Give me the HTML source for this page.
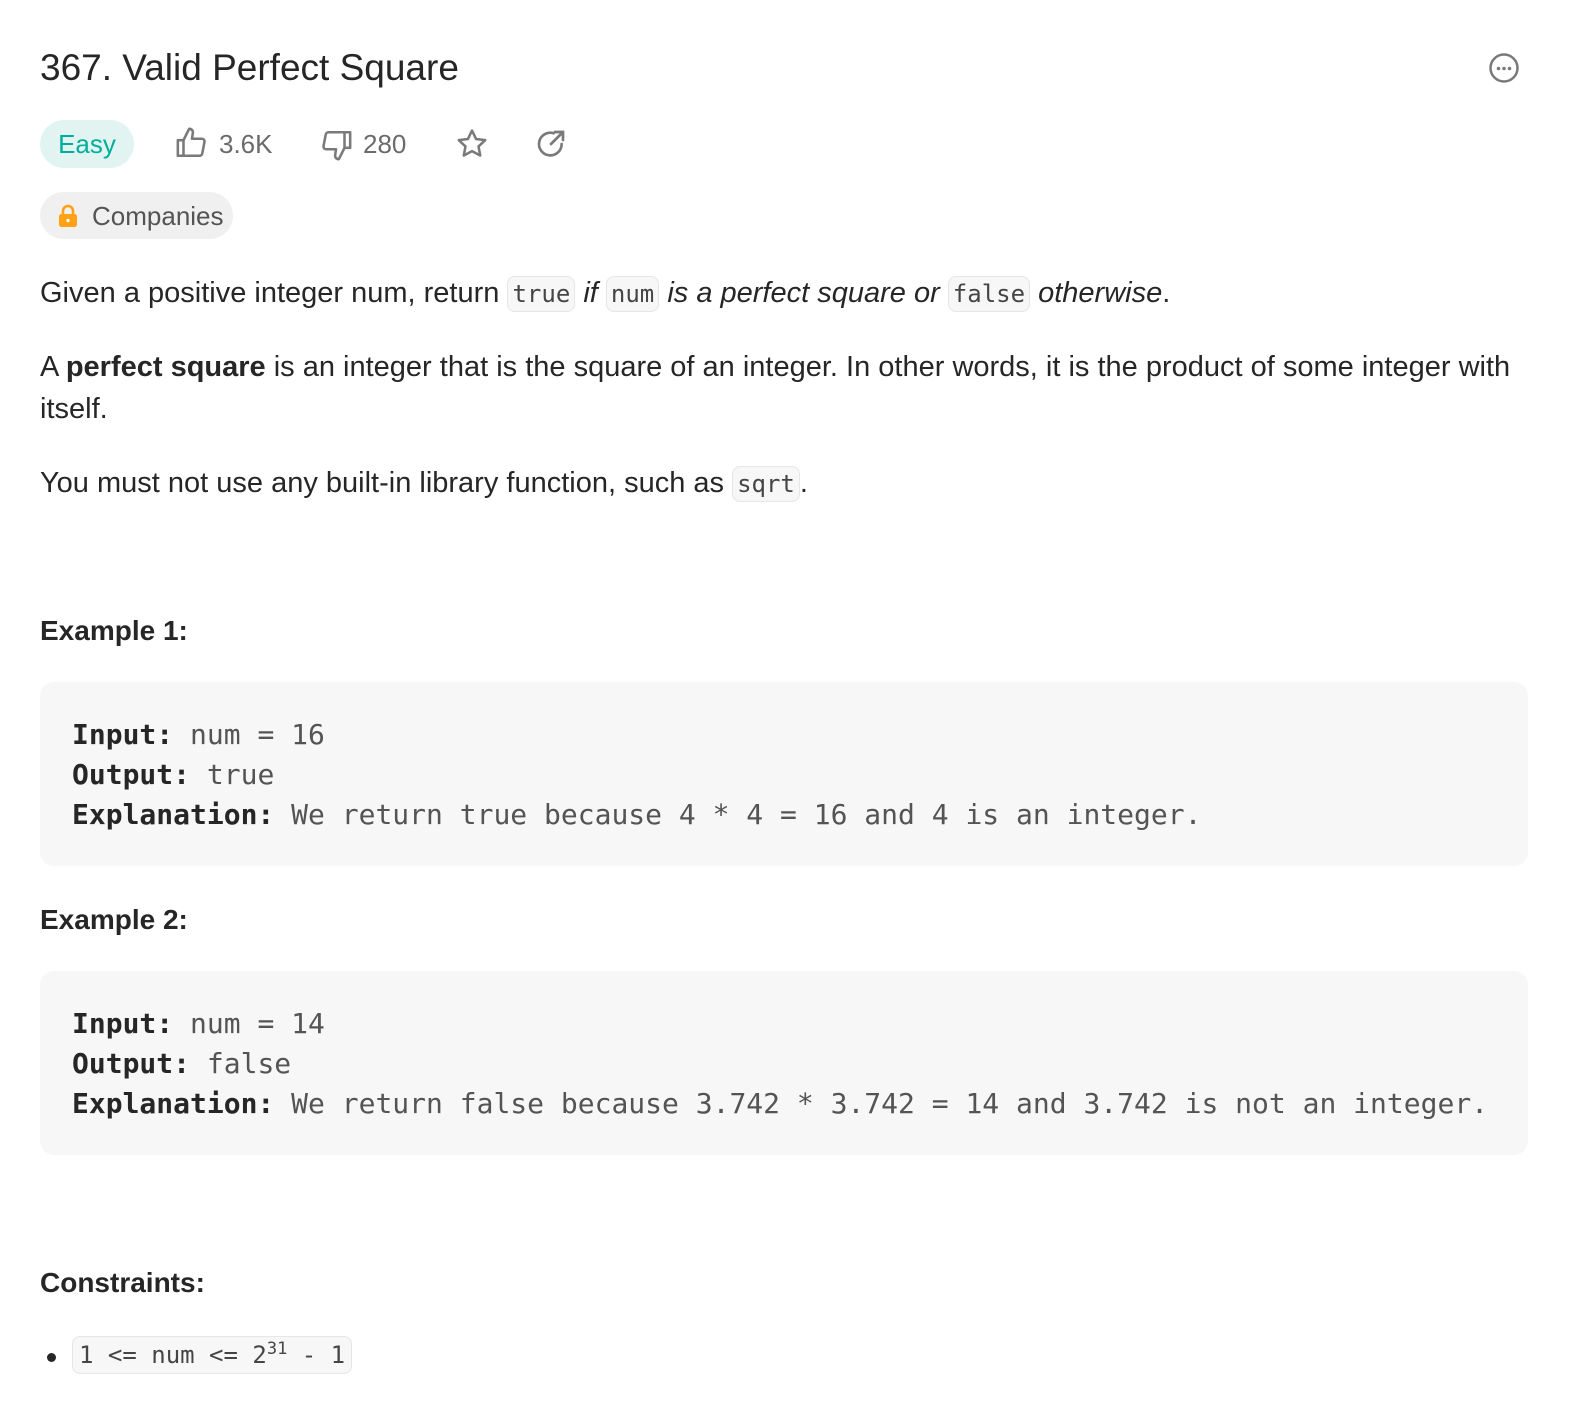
<!DOCTYPE html>
<html><head><meta charset="utf-8"><style>
body{margin:0;background:#fff;width:1572px;height:1420px;position:relative;font-family:"Liberation Sans",sans-serif;color:#262626;overflow:hidden}
.a{position:absolute;left:40px;white-space:nowrap}
p{margin:0;font-size:29px;line-height:42px}
code{font-family:"DejaVu Sans Mono",monospace;font-size:24px;background:#f7f7f7;border:1.5px solid #e6e6e6;border-radius:8px;padding:3px 4px;color:#454545}
h1{margin:0;font-size:37px;font-weight:normal}
.pre{position:absolute;left:40px;width:1488px;height:184px;background:#f7f7f7;border-radius:14px;font-family:"DejaVu Sans Mono",monospace;font-size:28px;line-height:40px;color:#545454;box-sizing:border-box;padding:32px 32px}
.pre b{color:#262626}
.h{font-size:28px;font-weight:bold}
.gray{color:#6b6b6b;font-size:26px}
</style></head><body>
<div class="a" style="top:47px"><h1>367. Valid Perfect Square</h1></div>
<svg style="position:absolute;left:1488px;top:52px" width="32" height="32" viewBox="0 0 32 32"><circle cx="16" cy="16" r="13.5" fill="none" stroke="#7a7a7a" stroke-width="2.5"/><circle cx="10.5" cy="16.5" r="1.8" fill="#7a7a7a"/><circle cx="16" cy="16.5" r="1.8" fill="#7a7a7a"/><circle cx="21.5" cy="16.5" r="1.8" fill="#7a7a7a"/></svg>
<div style="position:absolute;left:40px;top:120px;width:94px;height:48px;border-radius:24px;background:#e2f4f1;color:#00af9b;font-size:26px;line-height:48px;text-align:center;font-weight:500">Easy</div>
<svg style="position:absolute;left:175px;top:126px" width="34" height="34" viewBox="0 0 24 24" fill="none" stroke="#7a7a7a" stroke-width="1.8" stroke-linejoin="round"><path d="M2 10h4v11H2z"/><path d="M6 10l4-8c2 0 3 1.5 2.5 3.5L12 9h7c1.2 0 2 1 1.8 2.2l-1.5 8c-.2 1-1 1.8-2 1.8H6"/></svg>
<div class="a gray" style="left:219px;top:129px">3.6K</div>
<svg style="position:absolute;left:319px;top:128px" width="34" height="34" viewBox="0 0 24 24" fill="none" stroke="#7a7a7a" stroke-width="1.8" stroke-linejoin="round"><path d="M22 14h-4V3h4z"/><path d="M18 14l-4 8c-2 0-3-1.5-2.5-3.5L12 15H5c-1.2 0-2-1-1.8-2.2l1.5-8c.2-1 1-1.8 2-1.8H18"/></svg>
<div class="a gray" style="left:363px;top:129px">280</div>
<svg style="position:absolute;left:455px;top:127px" width="34" height="34" viewBox="0 0 24 24" fill="none" stroke="#7a7a7a" stroke-width="1.8" stroke-linejoin="round"><path d="M12 2.5l2.9 6 6.4.8-4.7 4.4 1.2 6.4L12 17l-5.8 3.1 1.2-6.4-4.7-4.4 6.4-.8z"/></svg>
<svg style="position:absolute;left:535px;top:128px" width="32" height="32" viewBox="0 0 24 24" fill="none" stroke="#7a7a7a" stroke-width="2" stroke-linecap="round"><path d="M20 12a8.5 8.5 0 1 1-6-8.1"/><path d="M12 12l9-9M15 3h6v6"/></svg>
<div style="position:absolute;left:40px;top:192px;width:193px;height:47px;border-radius:24px;background:#f0f0f1"></div>
<svg style="position:absolute;left:57px;top:204px" width="22" height="24" viewBox="0 0 22 24"><path d="M6 10V7a5 5 0 0 1 10 0v3" fill="none" stroke="#ffa116" stroke-width="2.6"/><rect x="2" y="10" width="18" height="13" rx="2.5" fill="#ffa116"/><circle cx="11" cy="16.5" r="1.7" fill="#fff"/></svg>
<div class="a" style="left:92px;top:201px;font-size:26px;color:#545454">Companies</div>
<div class="a" style="top:272px"><p>Given a positive integer num, return <code>true</code> <i>if</i> <code>num</code> <i>is a perfect square or</i> <code>false</code> <i>otherwise</i>.</p></div>
<div class="a" style="top:346px;width:1492px;white-space:normal"><p>A <b>perfect square</b> is an integer that is the square of an integer. In other words, it is the product of some integer with itself.</p></div>
<div class="a" style="top:462px"><p>You must not use any built-in library function, such as <code>sqrt</code>.</p></div>
<div class="a h" style="top:615px">Example 1:</div>
<div class="pre" style="top:682px;padding-top:33px"><b>Input:</b> num = 16<br><b>Output:</b> true<br><b>Explanation:</b> We return true because 4 * 4 = 16 and 4 is an integer.</div>
<div class="a h" style="top:904px">Example 2:</div>
<div class="pre" style="top:971px;padding-top:33px"><b>Input:</b> num = 14<br><b>Output:</b> false<br><b>Explanation:</b> We return false because 3.742 * 3.742 = 14 and 3.742 is not an integer.</div>
<div class="a h" style="top:1267px">Constraints:</div>
<div style="position:absolute;left:47px;top:1353px;width:9px;height:9px;border-radius:50%;background:#262626"></div>
<div class="a" style="left:72px;top:1339px"><code style="padding:4px 6px;font-size:24px">1 &lt;= num &lt;= 2<sup style="font-size:17px">31</sup> - 1</code></div>
</body></html>
